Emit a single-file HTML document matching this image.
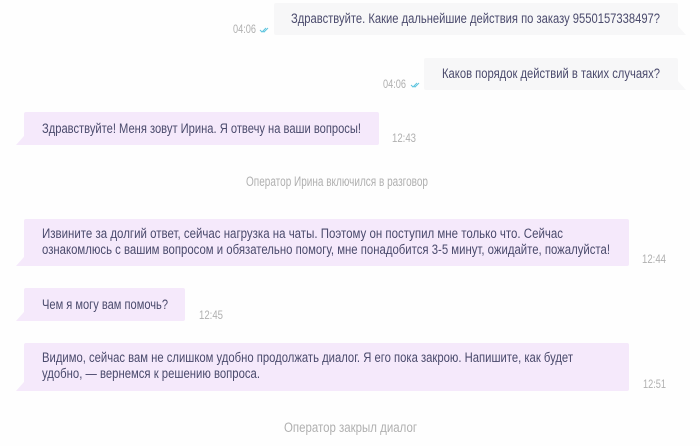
<!DOCTYPE html>
<html lang="ru">
<head>
<meta charset="utf-8">
<title>Чат</title>
<style>
html,body{margin:0;padding:0;background:#fefefe;width:700px;height:446px;overflow:hidden}
svg{display:block}
text{font-family:"Liberation Sans",sans-serif}
.m{font-size:13.5px;fill:#4a4a6c}
.t{font-size:11.5px;fill:#b0b0b0}
.s{font-size:13.5px;fill:#b0b0b0}
</style>
</head>
<body>
<svg width="700" height="446" viewBox="0 0 700 446" xmlns="http://www.w3.org/2000/svg">
<g fill="#f7f7f8">
<path d="M276 3H676a2 2 0 0 1 2 2V26L686 35H276a2 2 0 0 1-2-2V5a2 2 0 0 1 2-2z"/>
<path d="M426 58H676a2 2 0 0 1 2 2V81L686 90H426a2 2 0 0 1-2-2V60a2 2 0 0 1 2-2z"/>
</g>
<g fill="#f5e9fb">
<path d="M26 112H377a2 2 0 0 1 2 2V143a2 2 0 0 1-2 2H16L24 136V114a2 2 0 0 1 2-2z"/>
<path d="M26 219H627a2 2 0 0 1 2 2V264a2 2 0 0 1-2 2H16L24 257V221a2 2 0 0 1 2-2z"/>
<path d="M26 288H183a2 2 0 0 1 2 2V319a2 2 0 0 1-2 2H16L24 312V290a2 2 0 0 1 2-2z"/>
<path d="M26 343H627a2 2 0 0 1 2 2V389a2 2 0 0 1-2 2H16L24 382V345a2 2 0 0 1 2-2z"/>
</g>
<text class="m" x="291" y="23" textLength="369" lengthAdjust="spacingAndGlyphs">Здравствуйте. Какие дальнейшие действия по заказу 9550157338497?</text>
<text class="m" x="442" y="78" textLength="218" lengthAdjust="spacingAndGlyphs">Каков порядок действий в таких случаях?</text>
<text class="m" x="42" y="133" textLength="319" lengthAdjust="spacingAndGlyphs">Здравствуйте! Меня зовут Ирина. Я отвечу на ваши вопросы!</text>
<text class="m" x="42" y="238" textLength="521" lengthAdjust="spacingAndGlyphs">Извините за долгий ответ, сейчас нагрузка на чаты. Поэтому он поступил мне только что. Сейчас</text>
<text class="m" x="42" y="254" textLength="568" lengthAdjust="spacingAndGlyphs">ознакомлюсь с вашим вопросом и обязательно помогу, мне понадобится 3-5 минут, ожидайте, пожалуйста!</text>
<text class="m" x="42" y="309" textLength="126" lengthAdjust="spacingAndGlyphs">Чем я могу вам помочь?</text>
<text class="m" x="42" y="362" textLength="531" lengthAdjust="spacingAndGlyphs">Видимо, сейчас вам не слишком удобно продолжать диалог. Я его пока закрою. Напишите, как будет</text>
<text class="m" x="42" y="378" textLength="218" lengthAdjust="spacingAndGlyphs">удобно, — вернемся к решению вопроса.</text>
<text class="t" x="233" y="33" textLength="23" lengthAdjust="spacingAndGlyphs">04:06</text>
<text class="t" x="383" y="88" textLength="23" lengthAdjust="spacingAndGlyphs">04:06</text>
<text class="t" x="392" y="142" textLength="24" lengthAdjust="spacingAndGlyphs">12:43</text>
<text class="t" x="642" y="263" textLength="24" lengthAdjust="spacingAndGlyphs">12:44</text>
<text class="t" x="199" y="319" textLength="24" lengthAdjust="spacingAndGlyphs">12:45</text>
<text class="t" x="643" y="388" textLength="23" lengthAdjust="spacingAndGlyphs">12:51</text>
<text class="s" x="246" y="186" textLength="182" lengthAdjust="spacingAndGlyphs">Оператор Ирина включился в разговор</text>
<text class="s" x="284" y="432" textLength="133" lengthAdjust="spacingAndGlyphs">Оператор закрыл диалог</text>
<g fill="none" stroke="#5cc4de" stroke-width="1">
<path d="M260 30l2 2 4-4M263 31l1 1 4-4"/>
<path d="M411 85l2 2 4-4M414 86l1 1 4-4"/>
</g>
</svg>
</body>
</html>
